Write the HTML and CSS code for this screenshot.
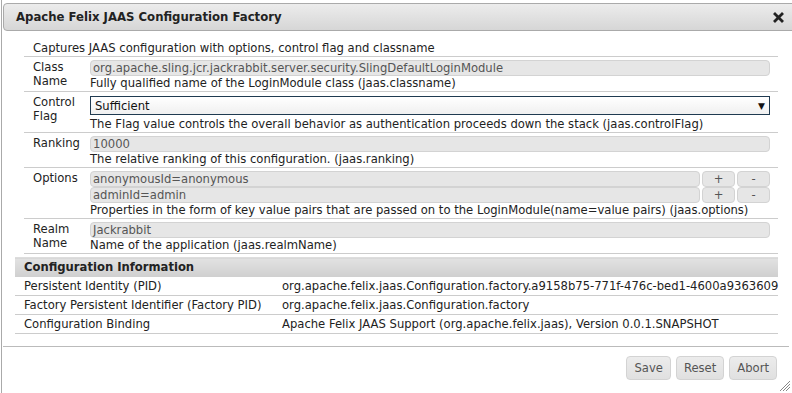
FILE: index.html
```html
<!DOCTYPE html>
<html lang="en">
<head>
    <meta charset="UTF-8">
    <title>Apache Felix JAAS Configuration Factory</title>
    <link rel="stylesheet" href="styles.css">
</head>
<body>

<div class="dialog">
    <div class="titlebar">
        <span class="title">Apache Felix JAAS Configuration Factory</span>
        <span class="close">
            <svg width="11" height="11" viewBox="0 0 11 11">
                <path d="M2 2 L9 9 M9 2 L2 9" stroke="#222" stroke-width="2.8" stroke-linecap="square"/>
            </svg>
        </span>
    </div>

    <div class="content">
        <table class="form">
            <tr>
                <td colspan="2" class="intro">Captures JAAS configuration with options, control flag and classname</td>
            </tr>
            <tr>
                <td class="label">Class<br>Name</td>
                <td class="field">
                    <div class="input">org.apache.sling.jcr.jackrabbit.server.security.SlingDefaultLoginModule</div>
                    <div class="desc">Fully qualified name of the LoginModule class (jaas.classname)</div>
                </td>
            </tr>
            <tr>
                <td class="label">Control<br>Flag</td>
                <td class="field">
                    <div class="select"><span>Sufficient</span><span class="arrow">&#9660;</span></div>
                    <div class="desc">The Flag value controls the overall behavior as authentication proceeds down the stack (jaas.controlFlag)</div>
                </td>
            </tr>
            <tr>
                <td class="label">Ranking</td>
                <td class="field">
                    <div class="input">10000</div>
                    <div class="desc">The relative ranking of this configuration. (jaas.ranking)</div>
                </td>
            </tr>
            <tr>
                <td class="label">Options</td>
                <td class="field">
                    <div class="multi">
                        <div class="input">anonymousId=anonymous</div>
                        <span class="small-btn">+</span>
                        <span class="small-btn">-</span>
                    </div>
                    <div class="multi">
                        <div class="input">adminId=admin</div>
                        <span class="small-btn">+</span>
                        <span class="small-btn">-</span>
                    </div>
                    <div class="desc">Properties in the form of key value pairs that are passed on to the LoginModule(name=value pairs) (jaas.options)</div>
                </td>
            </tr>
            <tr>
                <td class="label">Realm<br>Name</td>
                <td class="field">
                    <div class="input">Jackrabbit</div>
                    <div class="desc">Name of the application (jaas.realmName)</div>
                </td>
            </tr>
        </table>

        <table class="info">
            <colgroup>
                <col class="key-col">
                <col>
            </colgroup>
            <tr>
                <th colspan="2">Configuration Information</th>
            </tr>
            <tr>
                <td>Persistent Identity (PID)</td>
                <td>org.apache.felix.jaas.Configuration.factory.a9158b75-771f-476c-bed1-4600a9363609</td>
            </tr>
            <tr>
                <td>Factory Persistent Identifier (Factory PID)</td>
                <td>org.apache.felix.jaas.Configuration.factory</td>
            </tr>
            <tr>
                <td>Configuration Binding</td>
                <td>Apache Felix JAAS Support (org.apache.felix.jaas), Version 0.0.1.SNAPSHOT</td>
            </tr>
        </table>
    </div>

    <div class="buttonpane">
        <button class="btn">Save</button>
        <button class="btn">Reset</button>
        <button class="btn">Abort</button>
    </div>

    <span class="resize">
        <svg width="12" height="12" viewBox="0 0 12 12">
            <path d="M11 1 L1 11 M11 4 L4 11 M11 7 L7 11" stroke="#888" stroke-width="1"/>
        </svg>
    </span>
</div>

</body>
</html>
```

FILE: styles.css
```css
* {
    box-sizing: border-box;
}

body {
    margin: 0;
    overflow: hidden;
    background: #fff;
    font-family: "DejaVu Sans", Verdana, sans-serif;
    font-size: 11.6px;
    color: #222;
}

.dialog {
    position: relative;
    width: 800px;
    height: 400px;
    margin: -1px 0 0 1px;
    padding: 3px 0 0 1px;
    border: 1px solid #aaa;
    background: #fff;
}

/* title bar */
.titlebar {
    display: flex;
    align-items: center;
    justify-content: space-between;
    height: 28px;
    padding: 0 0 0 12px;
    border: 1px solid #aaa;
    border-radius: 4px;
    background: linear-gradient(#ececec, #d6d6d6);
}

.title {
    font-weight: bold;
    font-size: 11.7px;
    color: #222;
}

.close {
    display: flex;
    margin-right: 15px;
}

/* content */
.content {
    padding: 7px 0 0 12px;
}

table {
    border-collapse: collapse;
}

.form {
    width: 754px;
    margin-left: 9px;
}

.form td {
    vertical-align: top;
    padding: 3px 0 0;
    border-bottom: 1px solid #ccc;
}

.form .intro {
    padding-left: 9px;
    line-height: 15px;
    height: 18px;
}

.form .label {
    width: 66px;
    padding-left: 9px;
    line-height: 14px;
}

.form .field {
    padding-right: 8px;
}

.input {
    height: 16px;
    line-height: 14px;
    padding: 0 2px;
    border: 1px solid #d3d3d3;
    border-radius: 4px;
    background: #e6e6e6;
    color: #555;
    white-space: nowrap;
    overflow: hidden;
}

.select {
    display: flex;
    justify-content: space-between;
    align-items: center;
    height: 19px;
    margin: 1px 0 2px;
    padding: 0 4px;
    border: 1px solid #1f3a50;
    background: linear-gradient(#fff, #f0f0f0);
    color: #111;
}

.arrow {
    font-size: 9px;
    color: #111;
}

.desc {
    line-height: 15px;
}

.multi {
    display: flex;
    gap: 2px;
}

.multi .input {
    flex: 1;
}

.small-btn {
    width: 33px;
    height: 16px;
    line-height: 14px;
    text-align: center;
    border: 1px solid #d3d3d3;
    border-radius: 4px;
    background: #e6e6e6;
    color: #555;
}

/* configuration information */
.info {
    width: 763px;
    margin-top: 3px;
    table-layout: fixed;
}

.info .key-col {
    width: 258px;
}

.info th {
    height: 19px;
    padding: 0 9px;
    text-align: left;
    font-size: 11.6px;
    color: #222;
    background: linear-gradient(#e2e2e2, #cfcfcf);
    border-top: 1px solid #ddd;
}

.info td {
    height: 19px;
    padding: 1px 0 0 9px;
    line-height: 15px;
    border-bottom: 1px solid #ccc;
    white-space: nowrap;
}

/* buttons */
.buttonpane {
    display: flex;
    justify-content: flex-end;
    gap: 5px;
    width: 786px;
    margin-top: 12px;
    padding: 9px 12px 0 0;
    border-top: 1px solid #bbb;
}

.btn {
    height: 24px;
    padding: 0 7px;
    border: 1px solid #d3d3d3;
    border-radius: 4px;
    background: linear-gradient(#ececec, #e0e0e0);
    color: #555;
    font-family: "DejaVu Sans", Verdana, sans-serif;
    font-size: 11.6px;
}

.resize {
    position: absolute;
    left: 777px;
    top: 380px;
    display: flex;
}
```
